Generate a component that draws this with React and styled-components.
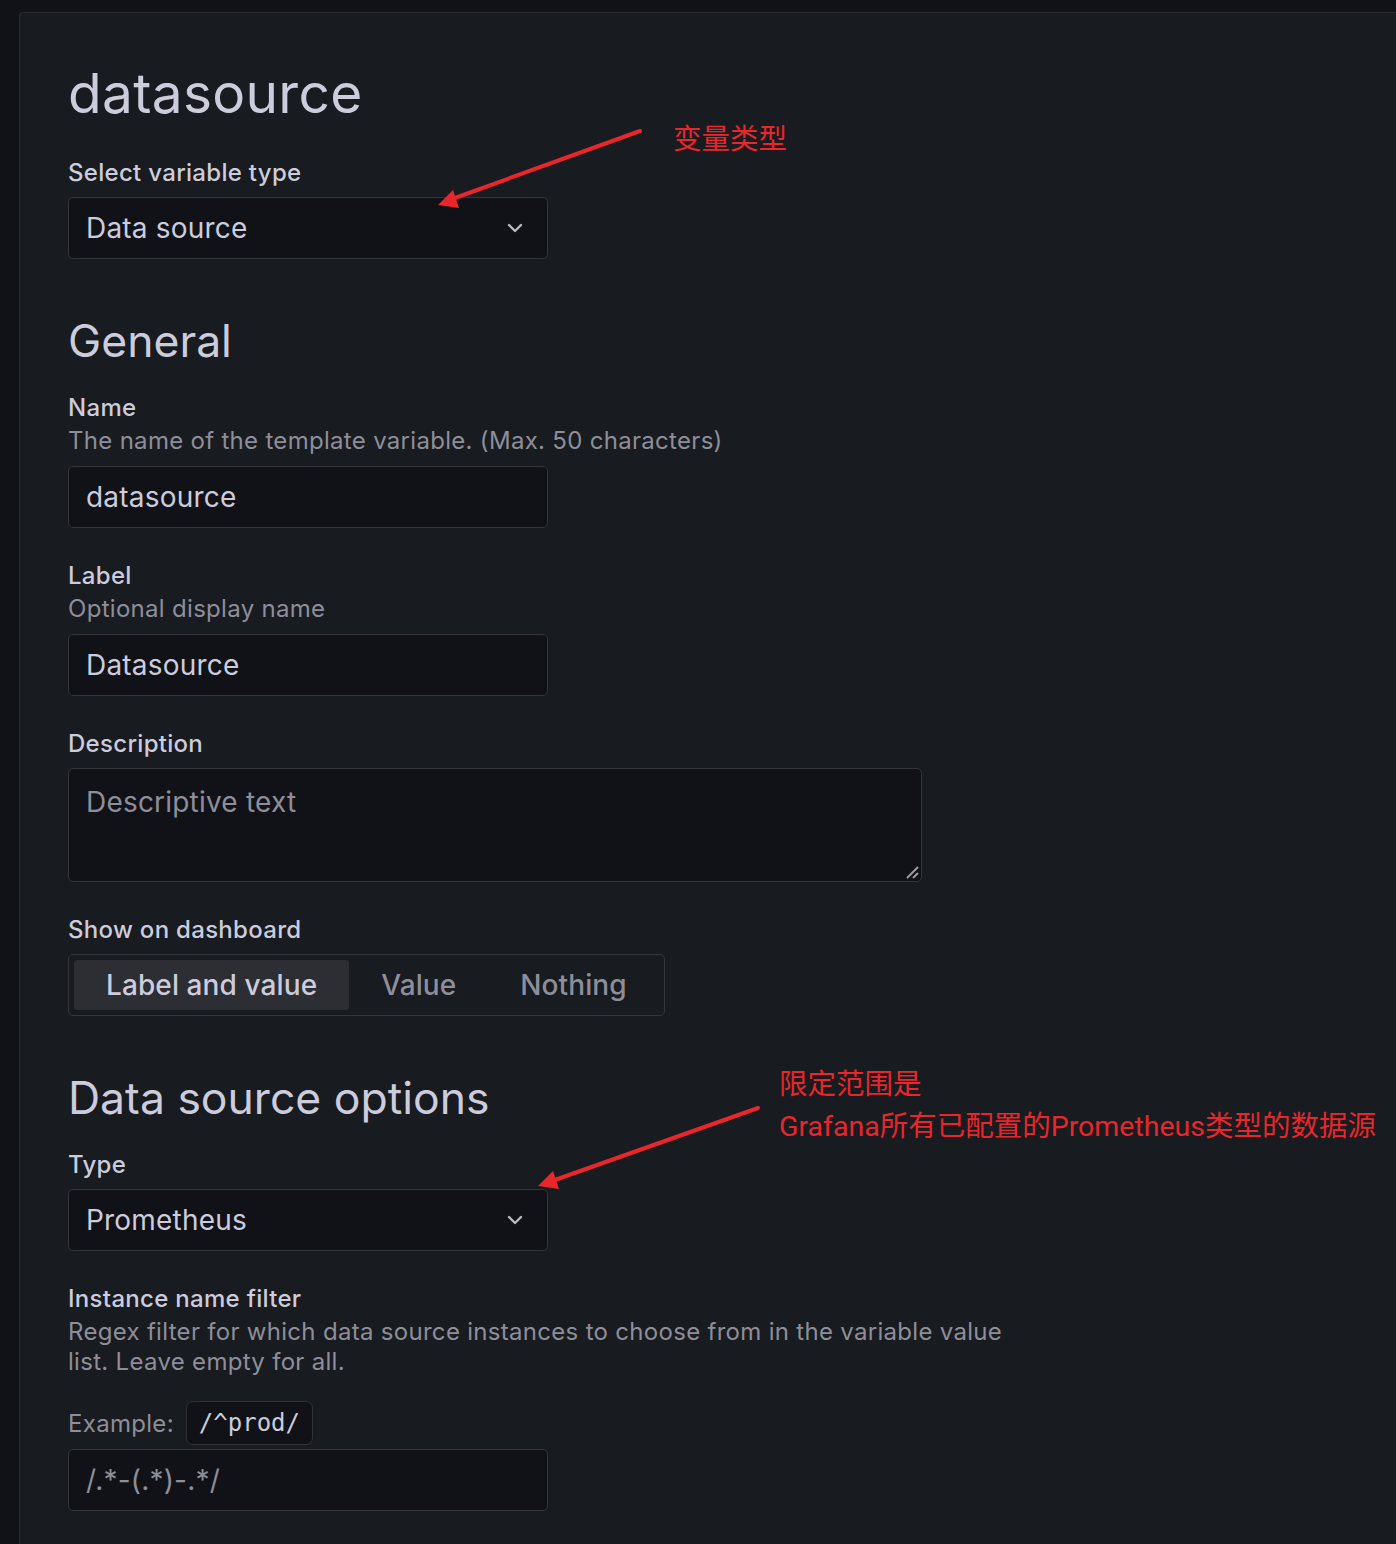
import React from "react";
import styled, { createGlobalStyle } from "styled-components";

const Global = createGlobalStyle`
  html, body { margin: 0; padding: 0; background: #111217; overflow: hidden; }
  body { font-family: Inter, "Noto Sans", sans-serif; color: #ccccdc; }
  * { box-sizing: border-box; }
`;

const Page = styled.div`
  position: relative;
  width: 1396px;
  height: 1544px;
  padding: 12px 0 0 19px;
  overflow: hidden;
`;

const Panel = styled.section`
  display: flex;
  flex-direction: column;
  align-items: flex-start;
  width: 1400px;
  min-height: 1560px;
  background: #181b1f;
  border: 1px solid #2a2c31;
  border-radius: 4px;
  padding: 48px 48px 0 48px;
`;

const Title = styled.h1`
  margin: 0 0 33px;
  font-size: 55px;
  line-height: 64px;
  font-weight: 400;
  color: #ccccdc;
  letter-spacing: 0.3px;
`;

const SectionTitle = styled.h2`
  margin: 21px 0 24px;
  font-size: 44.5px;
  line-height: 56px;
  font-weight: 400;
  color: #ccccdc;
`;

const Field = styled.div`
  margin-bottom: 33px;
`;

const LabelBlock = styled.div`
  padding-bottom: ${(p) => (p.$tight ? 0 : 10)}px;
  max-width: ${(p) => p.$max || "none"};
`;

const Label = styled.div`
  font-size: 24px;
  line-height: 29px;
  font-weight: 500;
  letter-spacing: 0.3px;
  color: #ccccdc;
`;

const Description = styled.div`
  margin-top: 4px;
  font-size: 24px;
  line-height: 30px;
  font-weight: 400;
  letter-spacing: 0.3px;
  color: #8e8e9a;
`;

const InputBox = styled.div`
  position: relative;
  display: flex;
  align-items: center;
  width: ${(p) => p.$w || 480}px;
  height: ${(p) => p.$h || 62}px;
  background: #111217;
  border: 1px solid #34363c;
  border-radius: 5px;
  padding: 0 17px;
`;

const InputText = styled.span`
  flex: 1;
  font-size: 28px;
  line-height: 32px;
  letter-spacing: 0.2px;
  color: ${(p) => (p.$placeholder ? "#8e8e9a" : "#ccccdc")};
`;

const TextArea = styled.div`
  position: relative;
  width: 854px;
  height: 114px;
  background: #111217;
  border: 1px solid #34363c;
  border-radius: 5px;
  padding: 17px 17px;
  font-size: 28px;
  line-height: 32px;
  letter-spacing: 0.2px;
  color: #8e8e9a;
`;

const ResizeHandle = styled.svg`
  position: absolute;
  right: 1px;
  bottom: 1px;
`;

const Chevron = styled.svg`
  flex: none;
  margin-right: 7px;
`;

const RadioGroup = styled.div`
  display: inline-flex;
  height: 62px;
  padding: 5px;
  background: #181b1f;
  border: 1px solid #34363c;
  border-radius: 5px;
`;

const Segment = styled.div`
  display: flex;
  align-items: center;
  padding: 0 32px;
  border-radius: 3px;
  font-size: 28px;
  font-weight: 500;
  letter-spacing: 0.1px;
  background: ${(p) => (p.$active ? "#2c2e34" : "transparent")};
  color: ${(p) => (p.$active ? "#ccccdc" : "#8e8e9a")};
`;

const ExampleRow = styled.div`
  display: flex;
  align-items: center;
  gap: 12px;
  margin-top: 24px;
  margin-bottom: 4px;
  font-size: 24px;
  letter-spacing: 0.3px;
  color: #8e8e9a;
`;

const Code = styled.code`
  display: inline-flex;
  align-items: center;
  height: 44px;
  padding: 0 12px;
  background: #111217;
  border: 1px solid #2f3136;
  border-radius: 7px;
  font-family: "DejaVu Sans Mono", "Liberation Mono", monospace;
  font-size: 24px;
  letter-spacing: 0;
  color: #ccccdc;
`;

const Overlay = styled.svg`
  position: absolute;
  left: 0;
  top: 0;
  pointer-events: none;
`;

const Note = styled.div`
  position: absolute;
  left: ${(p) => p.$x}px;
  top: ${(p) => p.$y}px;
  font-family: Roboto, "Noto Sans CJK SC", sans-serif;
  font-size: 28.5px;
  line-height: 42px;
  color: #e8262b;
  white-space: nowrap;
`;

const ChevronDown = () => (
  <Chevron width="16" height="10" viewBox="0 0 16 10">
    <path d="M2 2l6 6 6-6" fill="none" stroke="#b9b9c6" strokeWidth="2.4" strokeLinecap="round" strokeLinejoin="round" />
  </Chevron>
);

export default function App() {
  return (
    <Page>
      <Global />
      <Panel>
        <Title>datasource</Title>

        <Field>
          <LabelBlock>
            <Label>Select variable type</Label>
          </LabelBlock>
          <InputBox>
            <InputText>Data source</InputText>
            <ChevronDown />
          </InputBox>
        </Field>

        <SectionTitle>General</SectionTitle>

        <Field>
          <LabelBlock>
            <Label>Name</Label>
            <Description>The name of the template variable. (Max. 50 characters)</Description>
          </LabelBlock>
          <InputBox>
            <InputText>datasource</InputText>
          </InputBox>
        </Field>

        <Field>
          <LabelBlock>
            <Label>Label</Label>
            <Description>Optional display name</Description>
          </LabelBlock>
          <InputBox>
            <InputText>Datasource</InputText>
          </InputBox>
        </Field>

        <Field>
          <LabelBlock>
            <Label>Description</Label>
          </LabelBlock>
          <TextArea>
            Descriptive text
            <ResizeHandle width="16" height="16" viewBox="0 0 16 16">
              <path d="M3 14L14 3M9 14l5-5" stroke="#9a9aa6" strokeWidth="2" />
            </ResizeHandle>
          </TextArea>
        </Field>

        <Field>
          <LabelBlock>
            <Label>Show on dashboard</Label>
          </LabelBlock>
          <RadioGroup>
            <Segment $active>Label and value</Segment>
            <Segment>Value</Segment>
            <Segment>Nothing</Segment>
          </RadioGroup>
        </Field>

        <SectionTitle>Data source options</SectionTitle>

        <Field>
          <LabelBlock>
            <Label>Type</Label>
          </LabelBlock>
          <InputBox>
            <InputText>Prometheus</InputText>
            <ChevronDown />
          </InputBox>
        </Field>

        <Field>
          <LabelBlock $tight $max="955px">
            <Label>Instance name filter</Label>
            <Description>
              Regex filter for which data source instances to choose from in the variable value list. Leave empty for all.
            </Description>
            <ExampleRow>
              Example: <Code>/^prod/</Code>
            </ExampleRow>
          </LabelBlock>
          <InputBox>
            <InputText $placeholder>/.*-(.*)-.*/</InputText>
          </InputBox>
        </Field>
      </Panel>

      <Overlay width="1396" height="1544" viewBox="0 0 1396 1544">
        <g stroke="#e8262b" strokeWidth="4" strokeLinecap="round" fill="#e8262b">
          <line x1="640" y1="131" x2="452" y2="199" />
          <line x1="758" y1="1108" x2="552" y2="1181" />
        </g>
        <g fill="#e8262b">
          <polygon points="438,205 453,190 459,208" />
          <polygon points="538,1186 553,1171 559,1189" />
        </g>
      </Overlay>
      <Note $x={673} $y={119}>变量类型</Note>
      <Note $x={779} $y={1064}>
        限定范围是
        <br />
        Grafana所有已配置的Prometheus类型的数据源
      </Note>
    </Page>
  );
}
